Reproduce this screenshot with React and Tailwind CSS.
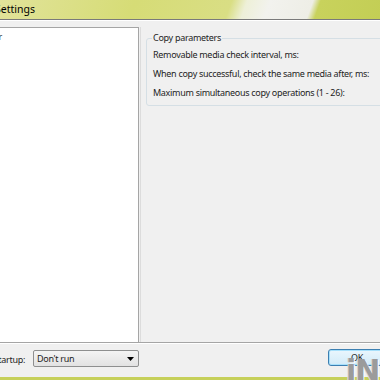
export default function App() {
  return (
    <div className="w-[380px] h-[380px] overflow-hidden bg-[#f0f0f0] relative font-['Noto_Sans',sans-serif] text-[9px] tracking-[-0.3px] text-[#1e1e1e] flex flex-col">
      {/* Title bar */}
      <div className="h-[19px] shrink-0 flex items-center bg-[linear-gradient(110deg,#e1e39a_0%,#d6dc76_35%,#d9de84_60%,#eef0d8_64%,#f2f2ee_70%,#eeeee6_81%,#c8d25c_83%,#c3ce55_100%)]">
        <span className="ml-[-5px] text-[10.5px] tracking-normal text-black leading-none">Settings</span>
      </div>
      <div className="h-px bg-[#7a7a7a] shrink-0" />
      <div className="h-px bg-white shrink-0" />

      {/* Body */}
      <div className="flex-1 flex pt-[6px] min-h-0">
        <div className="w-[140px] ml-[-1px] shrink-0 bg-white border border-[#a5a5a5] border-b-0 pt-[3px] overflow-hidden">
          <div className="ml-[-24px] leading-[12px]">Copier</div>
        </div>
        <div className="flex-1 border-l border-[#dcdcdc] ml-[1px] pl-[5px] pt-[5px]">
          <fieldset className="border border-[#d5dfe5] rounded-[3px] mr-[-10px] pl-[6px] pb-[6px] pt-0">
            <legend className="px-[1px] ml-[-1px] leading-[12px]">Copy parameters</legend>
            <div className="flex flex-col gap-[6px] pt-[4px]">
              <div className="leading-[13px]">Removable media check interval, ms:</div>
              <div className="leading-[13px]">When copy successful, check the same media after, ms:</div>
              <div className="leading-[13px]">Maximum simultaneous copy operations (1 - 26):</div>
            </div>
          </fieldset>
        </div>
      </div>

      <div className="h-px bg-[#a5a5a5] shrink-0" />
      <div className="h-px bg-white shrink-0" />

      {/* Bottom bar */}
      <div className="h-[33px] shrink-0 flex items-start pt-[6px]">
        <div className="w-[26px] shrink-0 flex justify-end pt-[3px] pr-[1px] overflow-hidden whitespace-nowrap">
          <span>Run at startup:</span>
        </div>
        <div className="ml-[7px] w-[106px] h-[17px] border border-[#8e8f8f] rounded-[2px] bg-[linear-gradient(#f4f4f4,#e2e2e2)] flex items-center pl-[3px] pr-[4px]">
          <span className="flex-1 leading-none">Don't run</span>
          <svg width="7" height="4" viewBox="0 0 7 4"><path d="M0 0h7L3.5 4z" fill="#000" /></svg>
        </div>
        <div className="ml-auto mr-[-30px] w-[82px] h-[17px] mt-[-1px] border border-[#3c7fb1] rounded-[3px] bg-[linear-gradient(#eaf6fd,#d2ebf8)] flex items-center pl-[22px] shadow-[inset_0_0_0_1px_#a7e0fb]">
          <span className="leading-none">OK</span>
        </div>
      </div>
      <div className="h-[3px] shrink-0 bg-[#c6d05a]" />

      {/* watermark */}
      <div className="absolute right-[-20px] bottom-[-6px] text-[30px] font-bold text-[#9b9b9b] leading-none tracking-[-1px] font-['DejaVu_Sans',sans-serif] [text-shadow:1px_1px_0_#fff,-1px_0_0_#d8d8d8]">
        iNS
      </div>
    </div>
  );
}
